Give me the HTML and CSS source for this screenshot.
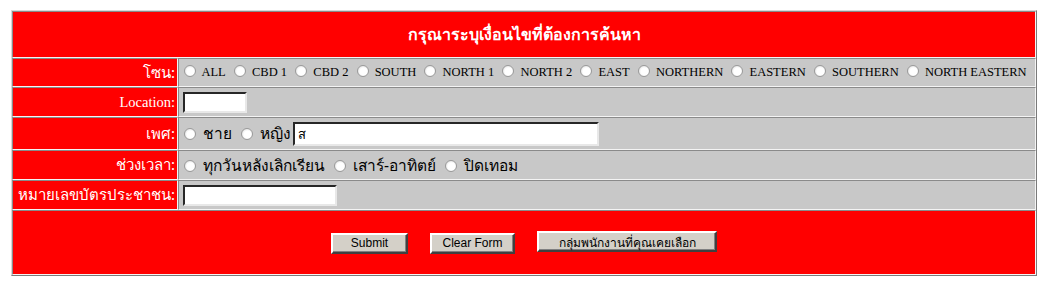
FILE: index.html
```html
<!DOCTYPE html>
<html lang="th">
<head>
<meta charset="utf-8">
<title>ค้นหา</title>
<link rel="stylesheet" href="styles.css">
</head>
<body>
<form class="search-form">
<table class="search">
  <colgroup>
    <col class="c-label">
    <col class="c-field">
  </colgroup>
  <tr class="row-head">
    <td colspan="2" class="head">กรุณาระบุเงื่อนไขที่ต้องการค้นหา</td>
  </tr>
  <tr class="row-zone">
    <td class="label">โซน:</td>
    <td class="field zone">
      <label class="opt"><input type="radio" name="zone"> ALL</label>
      <label class="opt"><input type="radio" name="zone"> CBD 1</label>
      <label class="opt"><input type="radio" name="zone"> CBD 2</label>
      <label class="opt"><input type="radio" name="zone"> SOUTH</label>
      <label class="opt"><input type="radio" name="zone"> NORTH 1</label>
      <label class="opt"><input type="radio" name="zone"> NORTH 2</label>
      <label class="opt"><input type="radio" name="zone"> EAST</label>
      <label class="opt"><input type="radio" name="zone"> NORTHERN</label>
      <label class="opt"><input type="radio" name="zone"> EASTERN</label>
      <label class="opt"><input type="radio" name="zone"> SOUTHERN</label>
      <label class="opt"><input type="radio" name="zone"> NORTH EASTERN</label>
    </td>
  </tr>
  <tr class="row-loc">
    <td class="label latin">Location:</td>
    <td class="field"><input type="text" class="txt loc"></td>
  </tr>
  <tr class="row-sex">
    <td class="label">เพศ:</td>
    <td class="field thai">
      <label class="opt"><input type="radio" name="sex"> ชาย</label>
      <label class="opt"><input type="radio" name="sex"> หญิง</label><input type="text" class="txt sex" value="ส">
    </td>
  </tr>
  <tr class="row-time">
    <td class="label">ช่วงเวลา:</td>
    <td class="field thai">
      <label class="opt"><input type="radio" name="time"> ทุกวันหลังเลิกเรียน</label>
      <label class="opt"><input type="radio" name="time"> เสาร์-อาทิตย์</label>
      <label class="opt"><input type="radio" name="time"> ปิดเทอม</label>
    </td>
  </tr>
  <tr class="row-id">
    <td class="label">หมายเลขบัตรประชาชน:</td>
    <td class="field"><input type="text" class="txt idno"></td>
  </tr>
  <tr class="row-btn">
    <td colspan="2" class="buttons">
      <button type="submit" class="btn b-submit">Submit</button>
      <button type="reset" class="btn b-clear">Clear Form</button>
      <button type="button" class="btn b-group">กลุ่มพนักงานที่คุณเคยเลือก</button>
    </td>
  </tr>
</table>
</form>
</body>
</html>
```

FILE: styles.css
```css
html, body {
  background: #ffffff;
}
body {
  margin: 10px 8px 8px 11px;
  font-family: "Liberation Serif", "Tahoma", serif;
  color: #000;
}
.search-form {
  margin: 0;
}
.search {
  width: 1026px;
  table-layout: fixed;
  border-collapse: separate;
  border-spacing: 0;
  border: 1px solid;
  border-color: #d8d8d8 #7a7a7a #7a7a7a #d8d8d8;
}
.c-label { width: 166px; }
.search td {
  border: 1px solid;
  border-color: #8a8a8a #f4f4f4 #f4f4f4 #8a8a8a;
  padding: 0 2px;
}
.row-head { height: 47px; }
.row-zone { height: 29px; }
.row-loc { height: 30px; }
.row-sex { height: 33px; }
.row-time { height: 30px; }
.row-id { height: 30px; }
.row-btn { height: 65px; }

.head {
  background: #ff0000;
  color: #fff;
  text-align: center;
  font-weight: bold;
  font-size: 16px;
  font-family: "Noto Sans", "DejaVu Sans", sans-serif;
}
.label {
  background: #ff0000;
  color: #fff;
  text-align: right;
  font-size: 15px;
  white-space: nowrap;
  font-family: "Noto Sans", "DejaVu Sans", sans-serif;
}
.label.latin {
  font-family: "Liberation Serif", serif;
  font-size: 14.5px;
}
.search td.field {
  background: #c8c8c8;
  white-space: nowrap;
  overflow: hidden;
  padding-left: 4px;
}
.zone {
  font-size: 12.5px;
  font-family: "Liberation Serif", serif;
}
.thai {
  font-size: 15.5px;
  font-family: "Noto Sans", "DejaVu Sans", sans-serif;
}
.opt {
  margin-right: 2px;
}
.opt input {
  appearance: none;
  -webkit-appearance: none;
  width: 12px;
  height: 12px;
  margin: 0 3px 0 3px;
  vertical-align: -1px;
  border-radius: 50%;
  border: 1px solid #9a9a9a;
  background: radial-gradient(circle at 55% 55%, #ffffff 0 45%, #e6e6e6 75%, #bdbdbd 100%);
}
.opt:first-child input {
  margin-left: 1px;
}
.txt {
  box-sizing: border-box;
  border: 2px inset;
  border-color: #7b7b7b #e8e8e8 #e8e8e8 #7b7b7b;
  background: #fff;
  padding: 1px 3px;
  font-size: 13px;
  font-family: "Noto Sans", "DejaVu Sans", sans-serif;
  vertical-align: middle;
  margin: 0;
}
.loc { width: 64px; height: 21px; }
.sex { width: 306px; height: 24px; }
.idno { width: 154px; height: 21px; }

.buttons {
  background: #ff0000;
  text-align: center;
}
.btn {
  height: 21px;
  padding: 0 6px;
  margin: 0 9px;
  background: #d4d0c8;
  border: 2px solid;
  border-color: #ffffff #404040 #404040 #ffffff;
  box-shadow: inset -1px -1px 0 #808080;
  font-family: "Liberation Sans", Arial, sans-serif;
  font-size: 12px;
  color: #000;
}
.b-submit { width: 77px; }
.b-clear { width: 85px; }
.b-group { width: 180px; }
```
